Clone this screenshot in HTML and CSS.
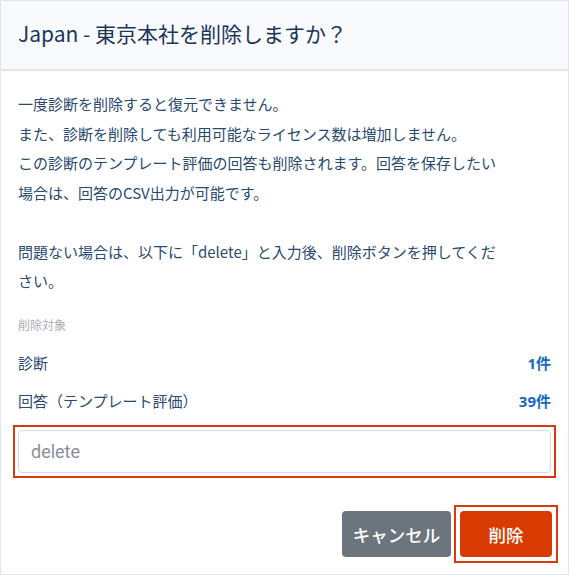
FILE: index.html
```html
<!DOCTYPE html>
<html lang="ja">
<head>
<meta charset="utf-8">
<title>削除確認</title>
<link rel="stylesheet" href="styles.css">
</head>
<body>
<div class="dialog">
  <div class="dialog-header">
    <h1 class="dialog-title">Japan - 東京本社を削除しますか？</h1>
  </div>
  <div class="dialog-body">
    <p class="message">一度診断を削除すると復元できません。<br>また、診断を削除しても利用可能なライセンス数は増加しません。<br>この診断のテンプレート評価の回答も削除されます。回答を保存したい場合は、回答のCSV出力が可能です。<br><br>問題ない場合は、以下に「delete」と入力後、削除ボタンを押してください。</p>
    <div class="target-label">削除対象</div>
    <div class="target-row first"><span>診断</span><span class="count">1件</span></div>
    <div class="target-row"><span>回答（テンプレート評価）</span><span class="count">39件</span></div>
    <div class="input-wrap">
      <input class="confirm-input" type="text" placeholder="delete">
    </div>
  </div>
  <div class="dialog-footer">
    <button class="btn btn-cancel">キャンセル</button>
    <span class="focus-ring"><button class="btn btn-delete">削除</button></span>
  </div>
</div>
</body>
</html>
```
FILE: styles.css
```css
* { box-sizing: border-box; }
html, body {
  margin: 0;
  padding: 0;
  background: #ffffff;
}
body {
  font-family: "Noto Sans CJK JP", "Noto Sans", sans-serif;
  color: #2a4a70;
}
.dialog {
  width: 569px;
  height: 575px;
  border: 1px solid #e1e6ee;
  background: #ffffff;
  display: flex;
  flex-direction: column;
}
.dialog-header {
  background: #f8fafd;
  border-bottom: 2px solid #e1e6ee;
  height: 70px;
  padding: 0 17px;
  display: flex;
  align-items: center;
}
.dialog-title {
  margin: 0;
  font-size: 21px;
  font-weight: 400;
  color: #1c3658;
  line-height: 28px;
  padding-bottom: 5px;
}
.dialog-body {
  padding: 18px 17px 0 17px;
}
.message {
  margin: 0;
  font-size: 15px;
  line-height: 29.5px;
  max-width: 492px;
  color: #2a4a70;
}
.target-label {
  margin-top: 20px;
  font-size: 12px;
  line-height: 18px;
  color: #a8adb3;
}
.target-row {
  display: flex;
  justify-content: space-between;
  align-items: center;
  font-size: 15px;
  line-height: 22px;
  margin-top: 16px;
  color: #2a4a70;
}
.target-row.first {
  margin-top: 18px;
}
.count {
  font-weight: 700;
  color: #1967c2;
  font-family: "Noto Sans", "Noto Sans CJK JP", sans-serif;
}
.input-wrap {
  margin-top: 13px;
  margin-left: -5px;
  margin-right: -5px;
  border: 2px solid #d93a0b;
  padding: 3px;
}
.confirm-input {
  display: block;
  width: 100%;
  height: 43px;
  border: 1px solid #d6dbe2;
  border-radius: 4px;
  padding: 0 12px;
  font-family: Roboto, "Noto Sans", sans-serif;
  font-size: 18px;
  color: #333;
  outline: none;
}
.confirm-input::placeholder {
  color: #8a8f96;
}
.dialog-footer {
  margin-top: auto;
  padding: 0 10px 11px 17px;
  display: flex;
  justify-content: flex-end;
  align-items: center;
  gap: 3px;
}
.focus-ring {
  display: flex;
  border: 2px solid #d93a0b;
  padding: 4px;
}
.btn {
  height: 46px;
  border: none;
  border-radius: 4px;
  color: #ffffff;
  font-family: "Noto Sans CJK JP", sans-serif;
  font-size: 17.5px;
  font-weight: 500;
  cursor: pointer;
}
.btn-cancel {
  background: #6c757e;
  width: 109px;
  padding: 0;
}
.btn-delete {
  background: #d83b01;
  width: 92px;
  padding: 0;
}
```
